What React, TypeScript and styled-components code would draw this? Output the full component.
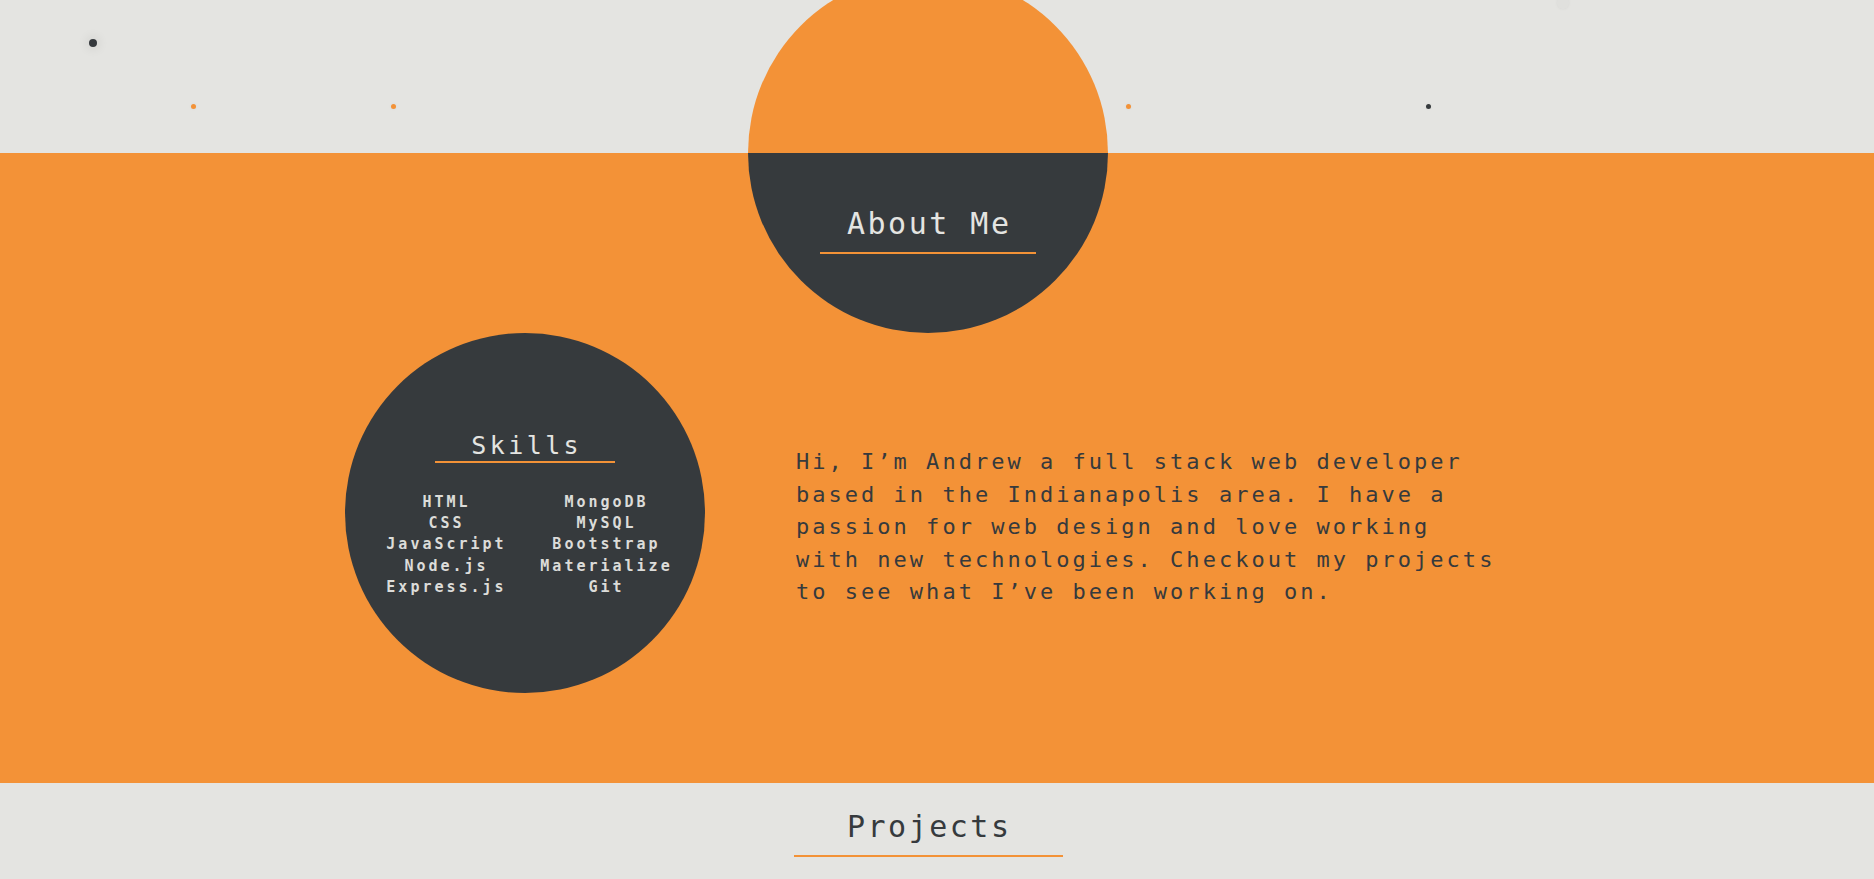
import React from "react";
import styled, { createGlobalStyle } from "styled-components";

const ORANGE = "#f39237";
const DARK = "#363a3d";
const LIGHT = "#e4e4e1";
const MONO = `"DejaVu Sans Mono", "Liberation Mono", monospace`;

const GlobalStyle = createGlobalStyle`
  html, body {
    margin: 0;
    padding: 0;
    background: ${LIGHT};
    overflow: hidden;
  }
  body {
    font-family: ${MONO};
    color: ${DARK};
  }
  * { box-sizing: border-box; }
`;

const Page = styled.div`
  display: flex;
  flex-direction: column;
  min-height: 879px;
`;

const Hero = styled.header`
  position: relative;
  height: 153px;
  background: ${LIGHT};
`;

const Particle = styled.span<{ $size: number; $color: string; $glow?: boolean }>`
  position: absolute;
  width: ${(p) => p.$size}px;
  height: ${(p) => p.$size}px;
  margin: ${(p) => -p.$size / 2}px 0 0 ${(p) => -p.$size / 2}px;
  border-radius: 50%;
  background: ${(p) => p.$color};
  box-shadow: ${(p) => (p.$glow ? "0 0 10px 4px rgba(0,0,0,0.05)" : "0 0 3px rgba(0,0,0,0.06)")};
`;

const Band = styled.section`
  background: ${ORANGE};
  display: flex;
  flex-direction: column;
  align-items: center;
  padding: 0 18px 90px 0;
`;

const TitleCircle = styled.div`
  position: relative;
  z-index: 1;
  width: 360px;
  height: 360px;
  margin-top: -180px;
  border-radius: 50%;
  background: linear-gradient(to bottom, ${ORANGE} 50%, ${DARK} 50%);
  display: flex;
  flex-direction: column;
  align-items: center;
  padding-top: 233px;
`;

const SectionTitle = styled.h2<{ $width: number; $color: string }>`
  margin: 0;
  width: ${(p) => p.$width}px;
  font-family: ${MONO};
  font-weight: 400;
  font-size: 30px;
  line-height: 36px;
  letter-spacing: 2.5px;
  text-indent: 2.5px;
  text-align: center;
  color: ${(p) => p.$color};
  padding-bottom: 10px;
  border-bottom: 2px solid ${ORANGE};
`;

const AboutRow = styled.div`
  display: flex;
  align-items: flex-start;
  gap: 91px;
`;

const SkillsCircle = styled.div`
  width: 360px;
  height: 360px;
  flex: none;
  border-radius: 50%;
  background: ${DARK};
  display: flex;
  flex-direction: column;
  align-items: center;
  padding-top: 98px;
`;

const SkillsTitle = styled.h3`
  margin: 0;
  width: 180px;
  font-family: ${MONO};
  font-weight: 400;
  font-size: 25px;
  line-height: 30px;
  letter-spacing: 3.4px;
  text-indent: 3.4px;
  text-align: center;
  color: ${LIGHT};
  border-bottom: 2px solid ${ORANGE};
`;

const SkillsGrid = styled.div`
  margin-top: 29px;
  display: grid;
  grid-template-columns: 160px 160px;
`;

const SkillColumn = styled.ul`
  list-style: none;
  margin: 0;
  padding: 0;
  text-align: center;
`;

const Skill = styled.li`
  font-family: ${MONO};
  font-weight: 700;
  font-size: 15px;
  line-height: 21.2px;
  letter-spacing: 3px;
  text-indent: 3px;
  color: #dcdcd9;
`;

const Bio = styled.p`
  margin: 0;
  padding-top: 113px;
  width: 715px;
  font-family: ${MONO};
  font-size: 22px;
  line-height: 32.5px;
  letter-spacing: 3.02px;
  color: ${DARK};
`;

const Projects = styled.section`
  flex: 1;
  background: ${LIGHT};
  display: flex;
  flex-direction: column;
  align-items: center;
  padding: 26px 18px 0 0;
`;

const leftSkills = ["HTML", "CSS", "JavaScript", "Node.js", "Express.js"];
const rightSkills = ["MongoDB", "MySQL", "Bootstrap", "Materialize", "Git"];

const particles = [
  { x: 93, y: 43, size: 8, color: DARK, glow: true },
  { x: 193, y: 106, size: 5, color: ORANGE },
  { x: 393, y: 106, size: 5, color: ORANGE },
  { x: 1128, y: 106, size: 5, color: ORANGE },
  { x: 1428, y: 106, size: 5, color: DARK },
  { x: 1563, y: 3, size: 12, color: "rgba(200,200,196,0.12)" },
];

export default function App() {
  return (
    <>
      <GlobalStyle />
      <Page>
        <Hero>
          {particles.map((p, i) => (
            <Particle
              key={i}
              $size={p.size}
              $color={p.color}
              $glow={p.glow}
              style={{ left: p.x, top: p.y }}
            />
          ))}
        </Hero>
        <Band>
          <TitleCircle>
            <SectionTitle $width={216} $color={LIGHT}>About Me</SectionTitle>
          </TitleCircle>
          <AboutRow>
            <SkillsCircle>
              <SkillsTitle>Skills</SkillsTitle>
              <SkillsGrid>
                <SkillColumn>
                  {leftSkills.map((s) => (
                    <Skill key={s}>{s}</Skill>
                  ))}
                </SkillColumn>
                <SkillColumn>
                  {rightSkills.map((s) => (
                    <Skill key={s}>{s}</Skill>
                  ))}
                </SkillColumn>
              </SkillsGrid>
            </SkillsCircle>
            <Bio>
              Hi, I’m Andrew a full stack web developer based in the Indianapolis area. I have a
              passion for web design and love working with new technologies. Checkout my projects
              to see what I’ve been working on.
            </Bio>
          </AboutRow>
        </Band>
        <Projects>
          <SectionTitle $width={269} $color={DARK}>Projects</SectionTitle>
        </Projects>
      </Page>
    </>
  );
}
